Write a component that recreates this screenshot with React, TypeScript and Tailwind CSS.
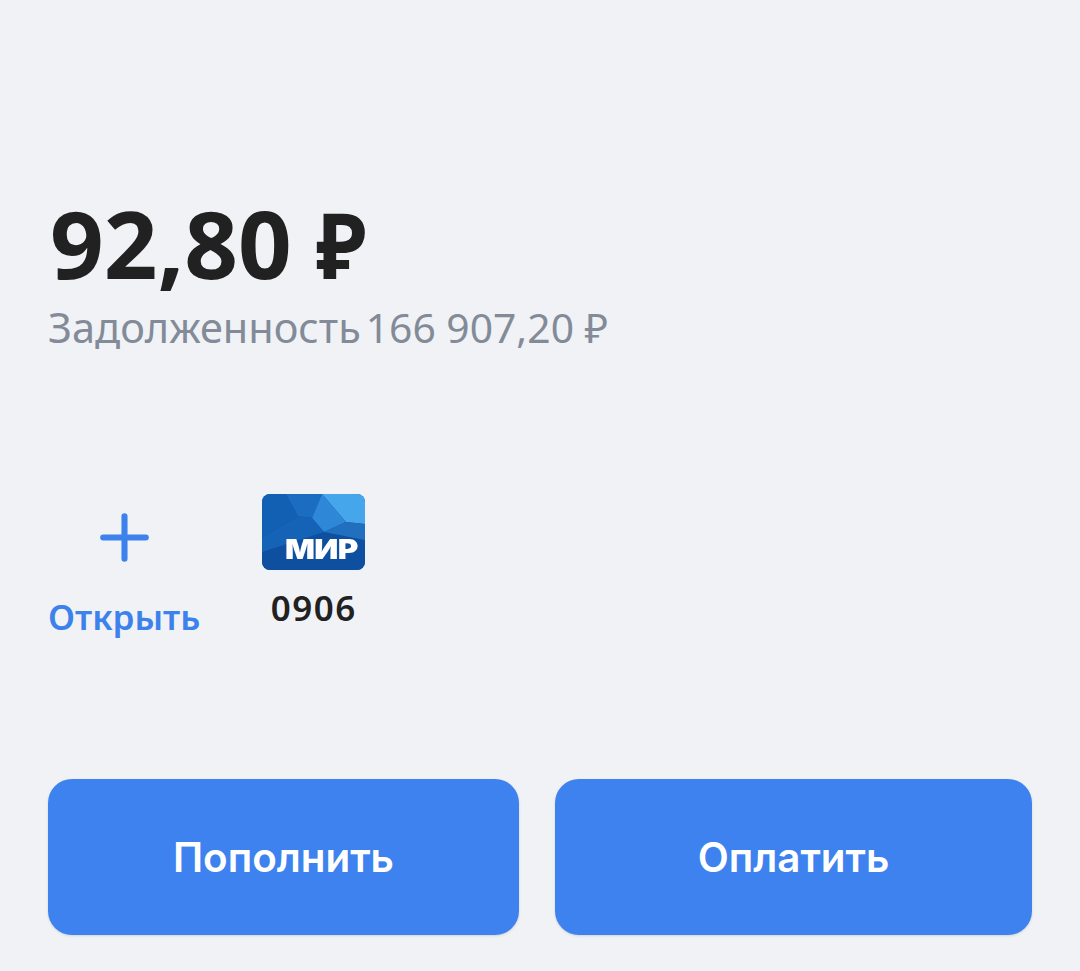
import React from 'react'
import { Plus } from 'lucide-react'

const MirCard: React.FC = () => {
  return (
    <div className="relative w-[103px] h-[76px] rounded-[8px] overflow-hidden bg-[#0f5bb0]">
      <svg viewBox="0 0 103 76" className="absolute inset-0 w-full h-full blur-[0.6px]">
        <rect width="103" height="76" fill="#0e4f9f" />
        <polygon points="0,0 24,0 36,22 0,44" fill="#1160b3" />
        <polygon points="24,0 60,0 50,24 36,22" fill="#1b6dc2" />
        <polygon points="60,0 103,0 103,30 84,28" fill="#46a6ec" />
        <polygon points="60,0 84,28 62,38 50,24" fill="#2f87d8" />
        <polygon points="84,28 103,30 103,46 62,38" fill="#2170c0" />
        <polygon points="0,44 36,22 50,24 62,38 0,58" fill="#1563b6" />
      </svg>
      <span className="absolute right-[8px] bottom-[6px] font-['Inter',sans-serif] font-black text-white text-[27px] leading-[28px] tracking-[-0.5px] scale-x-[1.16] origin-right">
        МИР
      </span>
    </div>
  )
}

export default function App() {
  return (
    <div className="w-[1080px] h-[971px] bg-[#f0f2f6] px-[48px] pt-[190px] font-['Noto_Sans',sans-serif] overflow-hidden">
      <div className="text-[94px] leading-[106px] font-bold text-[#212121] pl-[2px]">
        92,80 <span className="inline-block text-[92px] leading-[0] scale-x-[0.91] origin-left">₽</span>
      </div>
      <div className="flex gap-[5px] mt-[5px] leading-[52px] text-[#828b97]">
        <span className="text-[41.5px]">Задолженность</span>
        <span className="text-[40.8px]">166 907,20 ₽</span>
      </div>

      <div className="flex gap-[62px] mt-[141px] h-[285px]">
        <div className="flex flex-col items-center">
          <div className="h-[76px] pt-[2px] flex items-center justify-center">
            <Plus className="w-[73px] h-[73px] text-[#3d82ec] translate-y-[4px]" strokeWidth={2} />
          </div>
          <span className="mt-[25px] text-[35px] leading-[44px] font-semibold text-[#3d82ec]">Открыть</span>
        </div>
        <div className="flex flex-col items-center">
          <MirCard />
          <span className="mt-[16px] text-[35px] leading-[44px] font-semibold text-[#212121] tracking-[1.5px]">0906</span>
        </div>
      </div>

      <div className="flex gap-[36px]">
        <button className="w-[471px] h-[156px] pt-[2px] rounded-[24px] bg-[#3d82ef] shadow-sm text-white text-[40.4px] font-semibold font-['Inter',sans-serif]">
          Пополнить
        </button>
        <button className="w-[477px] h-[156px] pt-[2px] rounded-[24px] bg-[#3d82ef] shadow-sm text-white text-[40.4px] font-semibold font-['Inter',sans-serif]">
          Оплатить
        </button>
      </div>
    </div>
  )
}
